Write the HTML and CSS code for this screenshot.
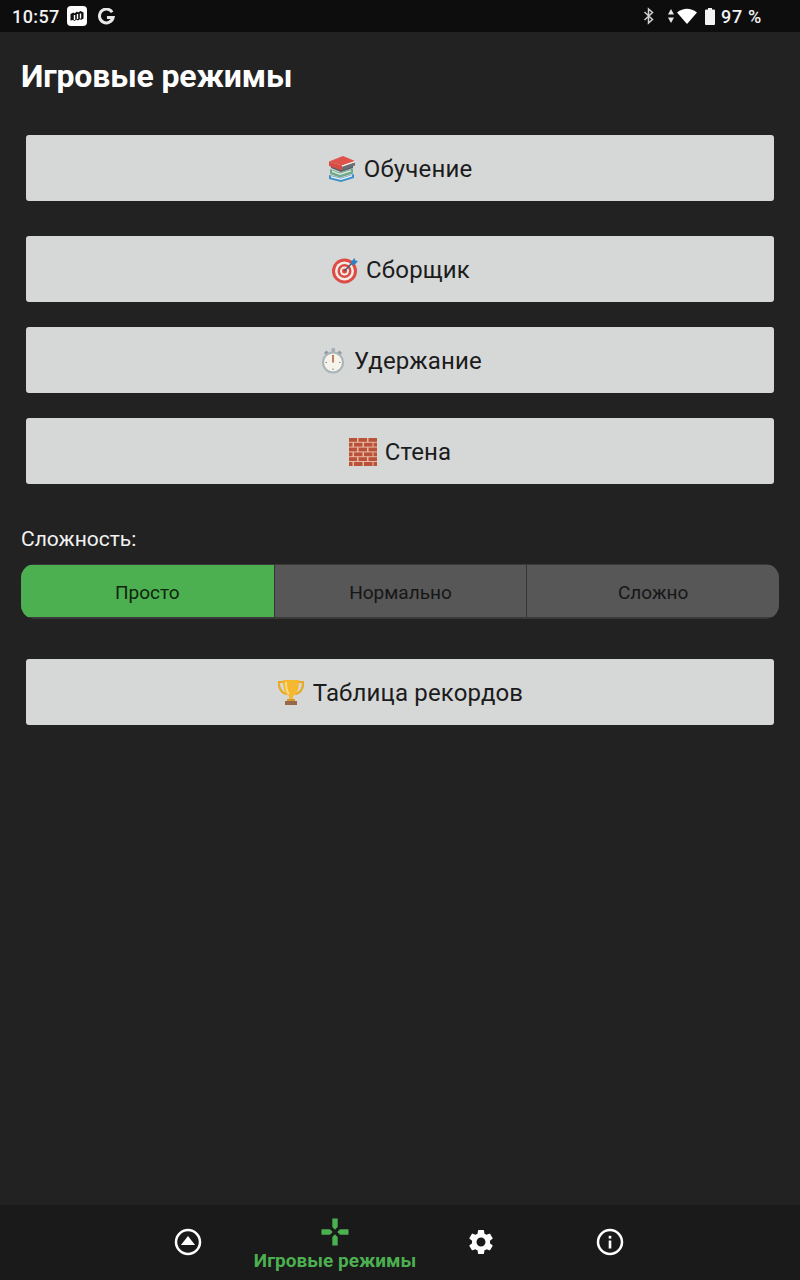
FILE: index.html
```html
<!DOCTYPE html>
<html lang="ru">
<head>
  <meta charset="UTF-8" />
  <meta name="viewport" content="width=device-width, initial-scale=1.0" />
  <title>Игровые режимы</title>
  <link rel="stylesheet" href="styles.css">
</head>
<body>
  <div class="app">

    <div class="status-bar">
      <div class="status-left">
        <span class="clock">10:57</span>
        <svg class="notif-app" width="20" height="20" viewBox="0 0 20 20">
          <rect width="20" height="20" rx="4" fill="#fff"/>
          <path d="M3.500 14.500V8l3-1.500 1 1 2.500-2 1 1 2.500-1.500 3 1.500v6l-2.500 1.500-1-1-2 1.500-1.500-1-2 1.500-1.500-1z" fill="#111"/>
          <path d="M7.500 9v5M10.500 8v5M13.500 7.500v5" stroke="#fff" stroke-width="1.400"/>
        </svg>
        <svg class="notif-g" width="17" height="17" viewBox="0 0 18 18">
          <path d="M15 4.500A7.300 7.300 0 1 0 16 10H9.500" fill="none" stroke="#e8e8e8" stroke-width="3.200"/>
        </svg>
      </div>
      <div class="status-right">
        <svg width="12" height="18" viewBox="0 0 12 18">
          <path d="M1.500 5l8 7.500L5.500 16V2l4 3.500-8 7.500" fill="none" stroke="#cfcfcf" stroke-width="1.500"/>
        </svg>
        <svg class="data-arrows" width="6" height="14" viewBox="0 0 6 14">
          <path d="M3 0l3 5.500H0zM3 14L0 8.500h6z" fill="#e8e8e8"/>
        </svg>
        <svg class="wifi" width="20" height="16" viewBox="0 0 20 16">
          <path d="M0 4.500Q10-3 20 4.500L10 16z" fill="#fff"/>
        </svg>
        <svg class="battery" width="10" height="17" viewBox="0 0 10 17">
          <path d="M3 0h4v1.500h2a1 1 0 0 1 1 1V16a1 1 0 0 1-1 1H1a1 1 0 0 1-1-1V2.500a1 1 0 0 1 1-1h2z" fill="#f2f2f2"/>
        </svg>
        <span class="battery-text">97 %</span>
      </div>
    </div>

    <main class="content">
      <h1 class="page-title">Игровые режимы</h1>

      <button class="mode-button first">
        <svg width="28" height="28" viewBox="0 0 28 28">
          <path d="M1 20l12 3 13-4v4l-13 4-12-3z" fill="#3f8fc9"/>
          <path d="M3 21l10 2.500 11-3.500v1.500l-11 3.500-10-2.500z" fill="#e6f0f5"/>
          <path d="M2 14l10 3.500 13-4v5l-13 4-10-3.500z" fill="#6fa88a"/>
          <path d="M4 15.500l8 3 11-3.500v1.500l-11 3.500-8-3z" fill="#dfe8df"/>
          <path d="M3 8l10 4 12-4v5l-12 4-10-4z" fill="#5a6168"/>
          <path d="M1 6.500L15 1l12 5-13 4.500z" fill="#e0524c"/>
          <path d="M1 6.500l13 4v5l-13-4.500z" fill="#d84c46"/>
          <path d="M14 10.500l13-4.500v1.500l-13 4.500z" fill="#f0ece4"/>
          <path d="M14 12l13-4.500v3l-13 5z" fill="#6a6f74"/>
        </svg>
        <span>Обучение</span>
      </button>

      <button class="mode-button second">
        <svg width="28" height="28" viewBox="0 0 28 28">
          <circle cx="14.500" cy="15" r="12.500" fill="#dd4b45"/>
          <circle cx="14.500" cy="15" r="9.500" fill="#f1ece6"/>
          <circle cx="14.500" cy="15" r="7" fill="#dd4b45"/>
          <circle cx="14.500" cy="15" r="4.500" fill="#f1ece6"/>
          <circle cx="14.500" cy="15" r="2.500" fill="#dd4b45"/>
          <path d="M14.500 15L23 6" stroke="#4a5a68" stroke-width="1.500"/>
          <path d="M21 6l3.500-4 .8 2.500L28 5l-3.500 4-3-.5z" fill="#2f7fc4"/>
        </svg>
        <span>Сборщик</span>
      </button>

      <button class="mode-button">
        <svg width="28" height="28" viewBox="0 0 28 28">
          <path d="M6 6l2.500-2.500 2 2-2.500 2.500zM24 6l-2.500-2.500-2 2 2.500 2.500z" fill="#8f9aa0"/>
          <rect x="13.500" y="1" width="3.500" height="4" rx="1" fill="#a5aeb3"/>
          <circle cx="15" cy="15.500" r="11" fill="#aab4b9"/>
          <circle cx="15" cy="15.500" r="9" fill="#f6f3ea"/>
          <path d="M15 8v1.500M15 21.500V23M7.500 15.500H9M21 15.500h1.500" stroke="#8a8f92" stroke-width="1.200"/>
          <path d="M15 15.500V8" stroke="#b9744e" stroke-width="1.800"/>
        </svg>
        <span>Удержание</span>
      </button>

      <button class="mode-button">
        <svg width="28" height="28" viewBox="0 0 28 28">
          <rect width="28" height="28" fill="#e8b8a0"/>
          <g fill="#b9523a">
            <rect x="0" y="0" width="8" height="3.800"/><rect x="9.500" y="0" width="8.500" height="3.800"/><rect x="19.500" y="0" width="8.500" height="3.800"/>
            <rect x="0" y="4.800" width="3.500" height="3.800"/><rect x="5" y="4.800" width="8.500" height="3.800"/><rect x="15" y="4.800" width="8.500" height="3.800"/><rect x="24.500" y="4.800" width="3.500" height="3.800"/>
            <rect x="0" y="9.600" width="8" height="3.800"/><rect x="9.500" y="9.600" width="8.500" height="3.800"/><rect x="19.500" y="9.600" width="8.500" height="3.800"/>
            <rect x="0" y="14.400" width="3.500" height="3.800"/><rect x="5" y="14.400" width="8.500" height="3.800"/><rect x="15" y="14.400" width="8.500" height="3.800"/><rect x="24.500" y="14.400" width="3.500" height="3.800"/>
            <rect x="0" y="19.200" width="8" height="3.800"/><rect x="9.500" y="19.200" width="8.500" height="3.800"/><rect x="19.500" y="19.200" width="8.500" height="3.800"/>
            <rect x="0" y="24" width="3.500" height="4"/><rect x="5" y="24" width="8.500" height="4"/><rect x="15" y="24" width="8.500" height="4"/><rect x="24.500" y="24" width="3.500" height="4"/>
          </g>
        </svg>
        <span>Стена</span>
      </button>

      <div class="difficulty-label">Сложность:</div>
      <div class="difficulty">
        <div class="segment active">Просто</div>
        <div class="segment">Нормально</div>
        <div class="segment">Сложно</div>
      </div>

      <button class="mode-button records">
        <svg width="28" height="28" viewBox="0 0 28 28">
          <path d="M7 3H2c-.5 6 2 11 8 12M21 3h5c.5 6-2 11-8 12" fill="none" stroke="#e9a825" stroke-width="2.200"/>
          <path d="M6 1h16c0 9-2 14-6 16v3h-4v-3C8 15 6 10 6 1z" fill="#f5b82e"/>
          <path d="M9 3c0 6 1 10 3 12" fill="none" stroke="#fbdc85" stroke-width="2"/>
          <rect x="10" y="20" width="8" height="2" fill="#d8962a"/>
          <rect x="8" y="22" width="12" height="4" fill="#96694a"/>
        </svg>
        <span>Таблица рекордов</span>
      </button>
    </main>

    <nav class="bottom-nav">
      <div class="nav-item nav-home">
        <svg width="28" height="28" viewBox="0 0 28 28">
          <circle cx="14" cy="14" r="12" fill="none" stroke="#fff" stroke-width="2.500"/>
          <path d="M14 8l7 9H7z" fill="#fff"/>
        </svg>
      </div>
      <div class="nav-item nav-modes">
        <svg width="28" height="28" viewBox="0 0 28 28">
          <path d="M11.300.5h5.400V9L14 11.700 11.300 9zM11.300 27.500h5.400V19L14 16.300 11.300 19zM.5 11.300v5.400H9l2.700-2.700L9 11.300zM27.500 11.300v5.400H19L16.300 14 19 11.300z" fill="#4caf50"/>
        </svg>
        <span class="nav-label">Игровые режимы</span>
      </div>
      <div class="nav-item nav-settings">
        <svg width="30" height="30" viewBox="0 0 24 24">
          <path fill="#fff" d="M19.140 12.940c.04-.3.060-.61.060-.94s-.02-.64-.07-.94l2.030-1.580a.49.49 0 0 0 .12-.61l-1.920-3.320a.488.488 0 0 0-.59-.22l-2.390.96c-.5-.38-1.030-.7-1.620-.94l-.36-2.540a.484.484 0 0 0-.48-.41h-3.840c-.24 0-.43.17-.47.41l-.36 2.540c-.59.240-1.130.570-1.620.94l-2.390-.96c-.22-.08-.47 0-.59.220L2.740 8.870c-.12.210-.08.470.120.610l2.030 1.580c-.05.3-.09.630-.09.940s.02.640.07.940l-2.030 1.580a.49.49 0 0 0-.12.610l1.920 3.320c.12.220.37.290.59.220l2.390-.96c.5.380 1.030.7 1.620.94l.36 2.540c.05.240.24.410.48.410h3.840c.24 0 .44-.17.470-.41l.36-2.540c.59-.24 1.130-.56 1.620-.94l2.390.96c.22.080.47 0 .59-.22l1.920-3.320c.12-.22.070-.47-.12-.61l-2.010-1.580zM12 15.600A3.610 3.610 0 0 1 8.400 12c0-1.980 1.620-3.600 3.600-3.600s3.600 1.620 3.600 3.600-1.620 3.600-3.600 3.600z"/>
        </svg>
      </div>
      <div class="nav-item nav-info">
        <svg width="28" height="28" viewBox="0 0 28 28">
          <circle cx="14" cy="14" r="12" fill="none" stroke="#fff" stroke-width="2.500"/>
          <rect x="12.700" y="12.500" width="2.600" height="8" fill="#fff"/>
          <rect x="12.700" y="7.800" width="2.600" height="2.800" fill="#fff"/>
        </svg>
      </div>
    </nav>

  </div>
</body>
</html>
```

FILE: styles.css
```css
* {
  box-sizing: border-box;
}
body {
  margin: 0;
  font-family: Roboto, "Noto Sans", sans-serif;
  background: #222222;
}
.app {
  width: 800px;
  height: 1280px;
  display: flex;
  flex-direction: column;
}

/* status bar */
.status-bar {
  height: 32px;
  background: #0d0d0d;
  color: #f2f2f2;
  display: flex;
  justify-content: space-between;
  align-items: center;
  padding: 0 38px 0 12px;
  flex-shrink: 0;
}
.status-left,
.status-right {
  display: flex;
  align-items: center;
}
.clock {
  font-size: 18px;
  font-weight: 500;
  letter-spacing: 0.4px;
}
.notif-app {
  margin-left: 7px;
}
.notif-g {
  margin-left: 11px;
}
.data-arrows {
  margin-left: 13px;
}
.wifi {
  margin-left: 3px;
}
.battery {
  margin-left: 8px;
}
.battery-text {
  font-size: 18px;
  font-weight: 500;
  margin-left: 6px;
  letter-spacing: 0.7px;
}

/* main */
.content {
  flex: 1;
  padding: 0 21px;
}
.page-title {
  margin: 26px 0 41px;
  font-size: 32px;
  line-height: 36px;
  font-weight: 700;
  letter-spacing: -0.15px;
  color: #fff;
}
.mode-button {
  display: flex;
  justify-content: center;
  align-items: center;
  gap: 8px;
  width: 748px;
  height: 66px;
  margin: 25px 5px 0;
  padding: 2px 0 0;
  border: none;
  border-radius: 3px;
  background: #d6d7d7;
  color: #1c1c1c;
  font-family: inherit;
  font-size: 24px;
  font-weight: 450;
  letter-spacing: 0.15px;
}
.mode-button.first {
  margin-top: 0;
}
.mode-button.second {
  margin-top: 35px;
}
.mode-button.records {
  margin-top: 40px;
}
.difficulty-label {
  margin-top: 42px;
  font-size: 21px;
  line-height: 26px;
  color: #f2f2f2;
}
.difficulty {
  display: grid;
  grid-template-columns: repeat(3, 1fr);
  height: 55px;
  margin-top: 12px;
  padding: 1px 0 2px;
  border-radius: 14px;
  background: #3a3a3a;
  overflow: hidden;
}
.segment {
  display: flex;
  justify-content: center;
  align-items: center;
  padding-top: 2px;
  font-size: 19px;
  font-weight: 450;
  color: #161616;
  background: #575757;
  border-left: 1px solid #333;
}
.segment:first-child {
  border-left: none;
}
.segment.active {
  background: #4caf50;
  color: #10240f;
}

/* bottom nav */
.bottom-nav {
  height: 75px;
  background: #1a1a1a;
  position: relative;
  flex-shrink: 0;
}
.nav-item {
  position: absolute;
  display: flex;
  flex-direction: column;
  align-items: center;
}
.nav-home {
  left: 174px;
  top: 23px;
}
.nav-modes {
  left: 253px;
  top: 13px;
  width: 164px;
}
.nav-settings {
  left: 466px;
  top: 22px;
}
.nav-info {
  left: 596px;
  top: 23px;
}
.nav-label {
  margin-top: 4px;
  font-size: 19px;
  line-height: 22px;
  font-weight: 700;
  color: #4caf50;
  white-space: nowrap;
}
```
